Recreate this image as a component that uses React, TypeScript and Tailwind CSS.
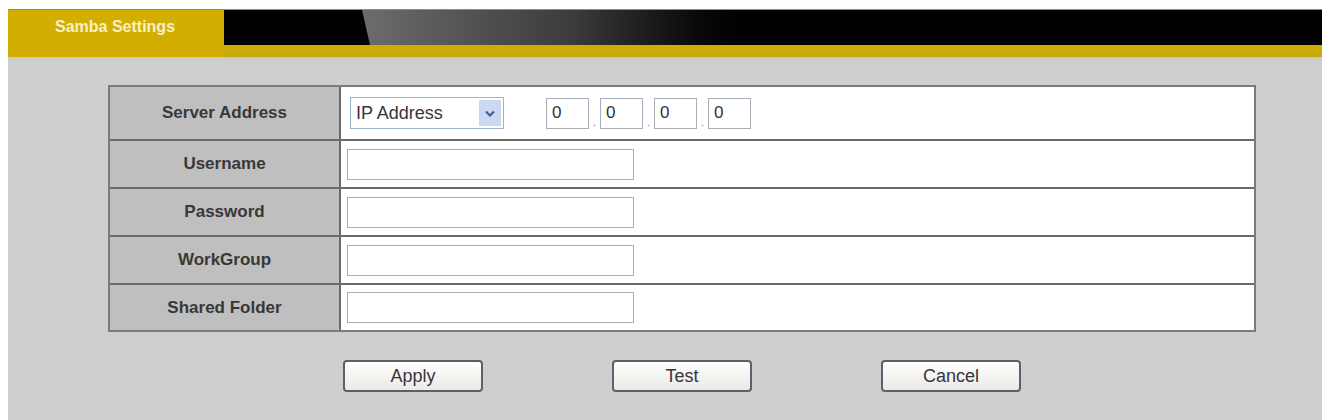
const fields = ['Username', 'Password', 'WorkGroup', 'Shared Folder'];

function TextBox() {
  return <input type="text" className="w-[287px] h-[31px] border border-[#a7aeb7] bg-white outline-none" />;
}

function IpBox() {
  return <div className="w-[43px] h-[31px] border border-[#a7aeb7] bg-white flex items-center pl-[5px] text-[17px] text-[#333]">0</div>;
}

export default function App() {
  return <div className="w-[1329px] h-[420px] bg-white pt-[9px] pl-[8px] pr-[7px] overflow-hidden" style={{ fontFamily: '"Liberation Sans", Arial, sans-serif' }}>
    <div className="flex flex-col h-full">
      {/* Header */}
      <div className="flex h-[48px] border-t border-[#8c8c8c]">
        <div className="w-[216px] bg-[#d2ae00] pt-[7px] pl-[47px] text-[16px] font-bold text-[#f8f1c6] leading-[20px]">
          Samba Settings
        </div>
        <div className="flex-1 flex flex-col">
          <div className="h-[35px] bg-black flex">
            <div className="w-[138px]" />
            <div className="w-[420px] bg-gradient-to-r from-[#6c6c6c] via-[#3c3c3c] to-black [clip-path:polygon(0_0,100%_0,100%_100%,8px_100%)]" />
          </div>
          <div className="flex-1 bg-gradient-to-b from-[#d0ad00] to-[#c4a80e]" />
        </div>
      </div>

      {/* Content */}
      <div className="flex-1 bg-gradient-to-b from-[#c9ccc3] to-[#cfcfcf] to-[6px] pt-[28px] pl-[100px]">
        <div className="w-[1148px] border-2 border-[#7b7b7b] bg-white">
          <div className="flex h-[54px] border-b-2 border-[#6b6b6b]">
            <div className="w-[231px] bg-[#bfbfbf] border-r-2 border-[#6b6b6b] flex items-center justify-center text-[17px] font-bold text-[#383838]">
              Server Address
            </div>
            <div className="flex items-center pl-[9px]">
              <div className="w-[154px] h-[32px] border border-[#9fb3cf] bg-white flex items-center justify-between pl-[5px] pr-[2px]">
                <span className="text-[18px] text-[#3a3340]">IP Address</span>
                <div className="w-[22px] h-[26px] bg-[#c9d9f1] flex items-center justify-center">
                  <svg width="10" height="7" viewBox="0 0 10 7">
                    <path d="M1 1.5 L5 5.5 L9 1.5" fill="none" stroke="#3b5a93" strokeWidth="2" />
                  </svg>
                </div>
              </div>
              <div className="flex items-end ml-[42px]">
                <IpBox />
                <span className="w-[11px] text-center text-[10px] text-[#666] leading-[12px]">.</span>
                <IpBox />
                <span className="w-[11px] text-center text-[10px] text-[#666] leading-[12px]">.</span>
                <IpBox />
                <span className="w-[11px] text-center text-[10px] text-[#666] leading-[12px]">.</span>
                <IpBox />
              </div>
            </div>
          </div>
          {fields.map((f, i) => <div key={f} className={i < fields.length - 1 ? 'flex h-[48px] border-b-2 border-[#6b6b6b]' : 'flex h-[45px]'}>
            <div className="w-[231px] bg-[#bfbfbf] border-r-2 border-[#6b6b6b] flex items-center justify-center text-[17px] font-bold text-[#383838]">
              {f}
            </div>
            <div className="flex items-center pl-[6px]">
              <TextBox />
            </div>
          </div>)}
        </div>

        <div className="flex gap-[129px] pl-[235px] mt-[28px]">
          {['Apply', 'Test', 'Cancel'].map(b => <button key={b} className="w-[140px] h-[32px] rounded-[4px] border-2 border-[#58626c] bg-gradient-to-b from-white to-[#ebeae5] text-[18px] text-[#3a3340]">
            {b}
          </button>)}
        </div>
      </div>
    </div>
  </div>;
}
